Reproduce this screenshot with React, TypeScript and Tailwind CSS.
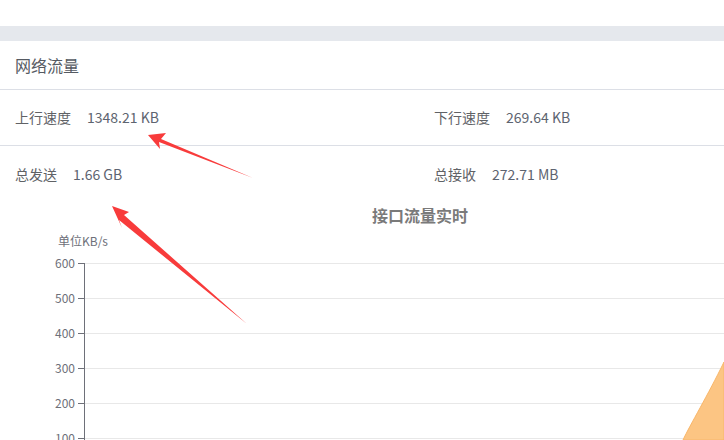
import React from 'react';

const stats = [
  [
    { label: '上行速度', value: '1348.21 KB' },
    { label: '下行速度', value: '269.64 KB' },
  ],
  [
    { label: '总发送', value: '1.66 GB' },
    { label: '总接收', value: '272.71 MB' },
  ],
];

const ticks = [600, 500, 400, 300, 200, 100];

const TrafficChart = () => (
  <svg width="724" height="238" viewBox="0 202 724 238" className="block">
    <text x="420" y="222" textAnchor="middle" fontSize="16" fontWeight="bold" fill="#7a7a7a">
      接口流量实时
    </text>
    <text x="83" y="246" textAnchor="middle" fontSize="12" fill="#6e7079">
      单位KB/s
    </text>
    {ticks.map((t, i) => {
      const y = 263.5 + i * 35;
      return (
        <g key={t}>
          <line x1="84" x2="724" y1={y} y2={y} stroke="#e8e8e8" strokeWidth="1" />
          <line x1="78" x2="84" y1={y} y2={y} stroke="#6e7079" strokeWidth="1" />
          <text x="75" y={y + 4} textAnchor="end" fontSize="12" fill="#6e7079">
            {t}
          </text>
        </g>
      );
    })}
    <line x1="84.5" x2="84.5" y1="263" y2="440" stroke="#6e7079" strokeWidth="1" />
    <path d="M683 440 C690 425 708 395 724 362 L724 440 Z" fill="#fcc583" stroke="#f9b76a" strokeWidth="1" />
  </svg>
);

const Arrows = () => (
  <svg width="724" height="440" className="absolute inset-0 pointer-events-none">
    <polygon points="148,135 166,133 161,139 253,178 159,142 160,149" fill="#f83b3b" />
    <polygon points="112,206 129,212 124,215 247,324 119,220 122,228" fill="#f83b3b" />
  </svg>
);

export default function App() {
  return (
    <div
      className="relative w-[724px] h-[440px] overflow-hidden bg-white"
      style={{ fontFamily: '"Noto Sans CJK SC", "Noto Sans", sans-serif' }}
    >
      <div className="h-[26px] bg-white" />
      <div className="h-[15px] bg-[#e5e8ed]" />
      <div className="h-[49px] flex items-center px-[15px] border-b border-[#dcdfe6] text-[16px] text-[#555a62]">
        网络流量
      </div>
      {stats.map((row, ri) => (
        <div
          key={ri}
          className={`h-[56px] grid grid-cols-[419px_1fr] items-center px-[15px] text-[14px] text-[#606266] ${
            ri === 0 ? 'border-b border-[#dcdfe6]' : ''
          }`}
        >
          {row.map((s) => (
            <div key={s.label} className="flex items-center gap-4">
              <span>{s.label}</span>
              <span className="text-[#5d6470]">{s.value}</span>
            </div>
          ))}
        </div>
      ))}
      <TrafficChart />
      <Arrows />
    </div>
  );
}
